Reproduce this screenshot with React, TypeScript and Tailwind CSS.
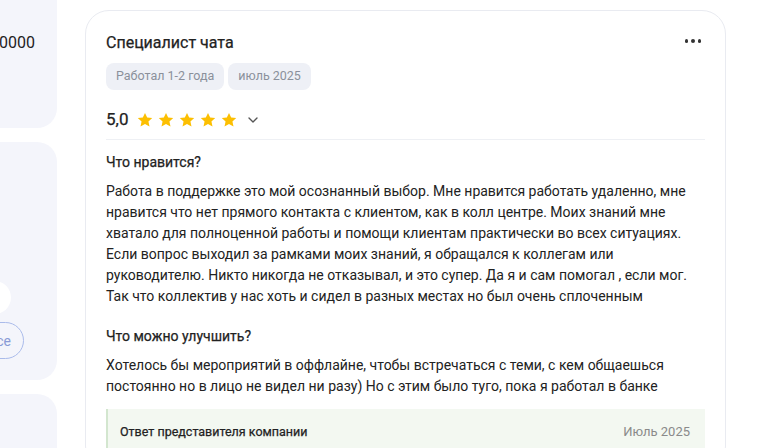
import { ChevronDown } from "lucide-react";

const Star = () => (
  <svg width="18" height="18" viewBox="0 0 24 24" className="shrink-0">
    <path
      d="M12 2.5l2.9 6.2 6.7.7-5 4.6 1.4 6.7L12 17.3l-6 3.4 1.4-6.7-5-4.6 6.7-.7z"
      fill="#fcbf02"
    />
  </svg>
);

export default function App() {
  return (
    <div className="flex h-[448px] w-[768px] overflow-hidden bg-white font-['Roboto',sans-serif] text-[#222]">
      {/* Left column (cut off by scroll) */}
      <div className="flex w-[57px] shrink-0 flex-col gap-[14px]">
        <div className="h-[128px] rounded-br-[20px] bg-[#f4f5fb] pt-[31px] text-base leading-6">
          <span className="-ml-px">0000</span>
        </div>
        <div className="flex h-[238px] flex-col justify-end overflow-hidden rounded-r-[20px] bg-[#f4f5fb] pb-[21px]">
          <div className="-ml-[22px] h-[33px] w-[33px] rounded-full bg-white" />
          <div className="mt-2 flex h-[37px] w-[70px] -ml-[46px] items-center justify-end rounded-full border border-[#aabbea] pr-[12px] text-sm text-[#8a9bd6]">
            ce
          </div>
        </div>
        <div className="flex-1 rounded-tr-[20px] bg-[#f4f5fb]" />
      </div>

      {/* Review card */}
      <div className="ml-[28px] mt-[10px] w-[641px] shrink-0 self-start rounded-[24px] border border-[#e9ebf1] bg-white px-5 pt-5">
        <div className="flex items-start justify-between">
          <h2 className="text-base font-normal leading-6 [-webkit-text-stroke:0.25px_#222]">
            Специалист чата
          </h2>
          <div className="mr-1 mt-[8px] flex gap-[3px]">
            <span className="h-[3.5px] w-[3.5px] rounded-full bg-[#333]" />
            <span className="h-[3.5px] w-[3.5px] rounded-full bg-[#333]" />
            <span className="h-[3.5px] w-[3.5px] rounded-full bg-[#333]" />
          </div>
        </div>

        <div className="mt-2 flex gap-1 text-[12.5px]">
          <span className="flex h-[27px] items-center rounded-lg bg-[#eef0f6] px-[10px] text-[#8b909b]">
            Работал 1-2 года
          </span>
          <span className="flex h-[27px] items-center rounded-lg bg-[#eef0f6] px-[10px] text-[#8b909b]">
            июль 2025
          </span>
        </div>

        <div className="mt-[18px] flex h-6 items-center">
          <span className="text-[17px] [-webkit-text-stroke:0.25px_#222]">5,0</span>
          <div className="ml-2 flex gap-[3px]">
            <Star />
            <Star />
            <Star />
            <Star />
            <Star />
          </div>
          <ChevronDown className="ml-[7px] text-[#555]" size={16} strokeWidth={2} />
        </div>

        <div className="mt-[7px] h-px bg-[#eef0f4]" />

        <h3 className="mt-3 text-sm leading-5 [-webkit-text-stroke:0.25px_#222]">Что нравится?</h3>
        <p className="mt-[9px] text-sm leading-[21px]">
          Работа в поддержке это мой осознанный выбор. Мне нравится работать удаленно, мне
          нравится что нет прямого контакта с клиентом, как в колл центре. Моих знаний мне
          хватало для полноценной работы и помощи клиентам практически во всех ситуациях.
          Если вопрос выходил за рамками моих знаний, я обращался к коллегам или
          руководителю. Никто никогда не отказывал, и это супер. Да я и сам помогал , если мог.
          Так что коллектив у нас хоть и сидел в разных местах но был очень сплоченным
        </p>

        <h3 className="mt-[19px] text-sm leading-5 [-webkit-text-stroke:0.25px_#222]">
          Что можно улучшить?
        </h3>
        <p className="mt-[9px] text-sm leading-[21px]">
          Хотелось бы мероприятий в оффлайне, чтобы встречаться с теми, с кем общаешься
          постоянно но в лицо не видел ни разу) Но с этим было туго, пока я работал в банке
        </p>

        <div className="mt-3 flex h-[60px] items-start justify-between border-l-2 border-[#d3e6cf] bg-[#f3f8f1] pl-3 pr-[15px] pt-[14px]">
          <span className="text-[12.5px] leading-[18px] [-webkit-text-stroke:0.25px_#222]">
            Ответ представителя компании
          </span>
          <span className="text-[13px] leading-[18px] text-[#8a8a8a]">Июль 2025</span>
        </div>
      </div>
    </div>
  );
}
